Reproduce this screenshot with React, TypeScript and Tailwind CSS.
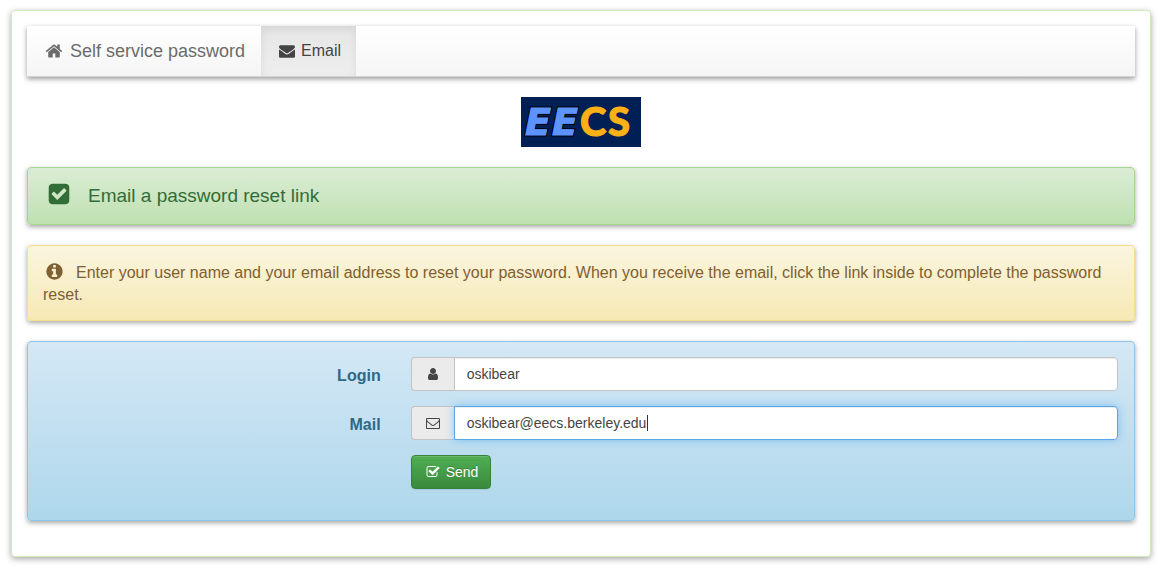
import { useEffect, useRef, useState } from 'react';
import type { ReactNode } from 'react';

const ICONS = {
  home: 'M1472 992v480q0 26-19 45t-45 19h-384v-384h-256v384h-384q-26 0-45-19t-19-45v-480q0-1 .5-3t.5-3l575-474 575 474q1 2 1 6zm223-69l-62 74q-8 9-21 11h-3q-13 0-21-7l-692-577-692 577q-12 8-24 7-13-2-21-11l-62-74q-8-10-7-23.5t11-21.5l719-599q32-26 76-26t76 26l244 204v-195q0-14 9-23t23-9h192q14 0 23 9t9 23v408l219 182q10 8 11 21.5t-7 23.5z',
  envelope:
    'M1792 710v794q0 66-47 113t-113 47h-1472q-66 0-113-47t-47-113v-794q44 49 101 87 362 246 497 345 57 42 92.5 65.5t94.5 48 110 24.5h2q51 0 110-24.5t94.5-48 92.5-65.5q170-123 498-345 57-39 100-87zm0-294q0 79-49 151t-122 123q-376 261-468 325-10 7-42.5 30.5t-54 38-52 32.5-57.5 27-50 9h-2q-23 0-50-9t-57.5-27-52-32.5-54-38-42.5-30.5q-91-64-262-182.5t-205-142.5q-62-42-117-115.5t-55-136.5q0-78 41.5-130t118.5-52h1472q65 0 112.5 47t47.5 113z',
  checkSquare:
    'M813 1299l614-614q19-19 19-45t-19-45l-102-102q-19-19-45-19t-45 19l-467 467-211-211q-19-19-45-19t-45 19l-102 102q-19 19-19 45t19 45l358 358q19 19 45 19t45-19zm851-883v960q0 119-84.5 203.5t-203.5 84.5h-960q-119 0-203.5-84.5t-84.5-203.5v-960q0-119 84.5-203.5t203.5-84.5h960q119 0 203.5 84.5t84.5 203.5z',
  infoCircle:
    'M1152 1376v-160q0-14-9-23t-23-9h-96v-512q0-14-9-23t-23-9h-320q-14 0-23 9t-9 23v160q0 14 9 23t23 9h96v320h-96q-14 0-23 9t-9 23v160q0 14 9 23t23 9h448q14 0 23-9t9-23zm-128-896v-160q0-14-9-23t-23-9h-192q-14 0-23 9t-9 23v160q0 14 9 23t23 9h192q14 0 23-9t9-23zm640 416q0 209-103 385.5t-279.5 279.5-385.5 103-385.5-103-279.5-279.5-103-385.5 103-385.5 279.5-279.5 385.5-103 385.5 103 279.5 279.5 103 385.5z',
  user: 'M1536 1399q0 109-62.5 187t-150.5 78h-854q-88 0-150.5-78t-62.5-187q0-85 8.5-160.5t31.5-152 58.5-131 94-89 134.5-34.5q131 128 313 128t313-128q76 0 134.5 34.5t94 89 58.5 131 31.5 152 8.5 160.5zm-256-887q0 159-112.5 271.5t-271.5 112.5-271.5-112.5-112.5-271.5 112.5-271.5 271.5-112.5 271.5 112.5 112.5 271.5z',
  envelopeOpen:
    'M1664 1504v-768q-32 36-69 66-268 206-426 338-51 43-83 67t-86.5 48.5-102.5 24.5h-2q-48 0-102.5-24.5t-86.5-48.5-83-67q-158-132-426-338-37-30-69-66v768q0 13 9.5 22.5t22.5 9.5h1472q13 0 22.5-9.5t9.5-22.5zm0-1051v-24.5l-.5-13-3-12.5-5.5-9-9-7.5-14-2.5h-1472q-13 0-22.5 9.5t-9.5 22.5q0 168 147 284 193 152 401 317 6 5 35 29.5t46 37.5 44.5 31.5 50.5 27.5 43 9h2q20 0 43-9t50.5-27.5 44.5-31.5 46-37.5 35-29.5q208-165 401-317 54-43 100.5-115.5t46.5-131.5zm128-37v1088q0 66-47 113t-113 47h-1472q-66 0-113-47t-47-113v-1088q0-66 47-113t113-47h1472q66 0 113 47t47 113z',
  checkSquareOpen:
    'M1472 930v318q0 119-84.5 203.5t-203.5 84.5h-832q-119 0-203.5-84.5t-84.5-203.5v-832q0-119 84.5-203.5t203.5-84.5h832q63 0 117 25 15 7 18 23 3 17-9 29l-49 49q-10 10-23 10-3 0-9-2-23-6-45-6h-832q-66 0-113 47t-47 113v832q0 66 47 113t113 47h832q66 0 113-47t47-113v-254q0-13 9-22l64-64q10-10 23-10 6 0 12 3 20 8 20 29zm231-489l-814 814q-24 24-57 24t-57-24l-430-430q-24-24-24-57t24-57l110-110q24-24 57-24t57 24l263 263 647-647q24-24 57-24t57 24l110 110q24 24 24 57t-24 57z',
};

function Icon({ name, className }: { name: keyof typeof ICONS; className: string }) {
  return (
    <svg viewBox="0 0 1792 1792" fill="currentColor" aria-hidden="true" className={className}>
      <path d={ICONS[name]} />
    </svg>
  );
}

function Logo() {
  return (
    <svg viewBox="0 0 120 50" role="img" aria-label="EECS" className="mx-auto mb-5 block h-[50px] w-[120px]">
      <rect width="120" height="50" fill="#001f54" />
      <g
        fontFamily="'DejaVu Sans', sans-serif"
        fontSize="38"
        fontWeight="700"
        fontStyle="italic"
        fill="#5c93ff"
        stroke="#000"
        strokeWidth="3"
        paintOrder="stroke"
      >
        <text x="4" y="38">E</text>
        <text x="31" y="38">E</text>
      </g>
      {/* Thin outline in the fill colour makes the letters heavier */}
      <g
        fontFamily="'DejaVu Sans', sans-serif"
        fontSize="38"
        fontWeight="700"
        fontStyle="italic"
        fill="#5c93ff"
        stroke="#5c93ff"
        strokeWidth="1"
      >
        <text x="4" y="38">E</text>
        <text x="31" y="38">E</text>
      </g>
      <g
        fontFamily="Lato, sans-serif"
        fontSize="40"
        fontWeight="900"
        fill="#fbb116"
        stroke="#fbb116"
        strokeWidth="1"
      >
        <text x="59" y="39">C</text>
        <text x="87" y="39">S</text>
      </g>
    </svg>
  );
}

interface FieldProps {
  id: string;
  label: string;
  icon: keyof typeof ICONS;
  type?: string;
  value: string;
  onChange: (value: string) => void;
  focused?: boolean;
}

function Field({ id, label, icon, type = 'text', value, onChange, focused }: FieldProps) {
  const ref = useRef<HTMLInputElement>(null);
  const [caret, setCaret] = useState(false);

  // Put the caret after the last character
  useEffect(() => {
    if (!focused || !ref.current) return;
    ref.current.focus();
    ref.current.setSelectionRange(value.length, value.length);
    setCaret(true);
  }, []);

  return (
    <div className="mb-[15px] flex">
      <label htmlFor={id} className="w-1/3 px-4 pt-2 text-right text-base leading-[22px] font-bold text-[#2d6987]">
        {label}
      </label>
      <div className="flex flex-1 pr-4 pl-[14px]">
        <span className="flex w-[43px] items-center justify-center rounded-l border border-r-0 border-[#c3c3c3] bg-[#ebebeb] text-[#444]">
          <Icon name={icon} className="size-[14px]" />
        </span>
        <div className="relative flex min-w-0 flex-1">
          <input
            ref={ref}
            id={id}
            type={type}
            value={value}
            onChange={(e) => {
              setCaret(false);
              onChange(e.target.value);
            }}
            onBlur={() => setCaret(false)}
            className="h-[34px] min-w-0 flex-1 rounded-r border border-[#c3c3c3] bg-white px-3 text-sm text-[#444] shadow-[inset_0_1px_1px_rgba(0,0,0,0.075)] outline-none focus:border-[#5aa5ea] focus:shadow-[inset_0_1px_1px_rgba(0,0,0,0.075),0_0_8px_rgba(82,168,236,0.6)]"
          />
          {caret && <span className="absolute top-[9px] left-[193px] h-4 w-px bg-[#333]" />}
        </div>
      </div>
    </div>
  );
}

function Panel({ className, children }: { className: string; children: ReactNode }) {
  return (
    <div className={`mb-5 rounded border bg-linear-to-b px-[15px] shadow-[0_2px_5px_rgba(0,0,0,0.35)] ${className}`}>
      {children}
    </div>
  );
}

export default function App() {
  const [login, setLogin] = useState('oskibear');
  const [mail, setMail] = useState('oskibear@eecs.berkeley.edu');

  return (
    <div className="bg-white py-[10px] pr-[10px] pl-[11px] font-['Liberation_Sans',Arial,sans-serif] text-base leading-[22px]">
      <main className="rounded border border-[#d0e9be] bg-white p-[15px] shadow-[0_2px_6px_rgba(0,0,0,0.35)]">
        <nav className="mb-5 flex h-[51px] border-b border-[#d4d4d4] bg-linear-to-b from-white to-[#f5f5f5] shadow-[0_2px_5px_rgba(0,0,0,0.4)]">
          <a href="#" className="flex items-center gap-[5px] pr-4 pl-[15px] text-lg text-[#6b6b6b]">
            <span className="flex w-[23px] justify-center">
              <Icon name="home" className="size-[18px]" />
            </span>
            Self service password
          </a>
          <a
            href="#email"
            aria-current="page"
            className="flex items-center gap-1 bg-linear-to-b from-[#e6e6e6] to-[#eeeeee] px-[15px] text-[#444] shadow-[inset_0_3px_9px_rgba(0,0,0,0.075)]"
          >
            <span className="flex w-[21px] justify-center">
              <Icon name="envelope" className="size-4" />
            </span>
            Email
          </a>
        </nav>

        <Logo />

        <Panel className="flex items-center gap-[14px] border-[#a5d690] from-[#dbedd5] to-[#bfe0b0] py-[14px] text-[19px] text-[#326d38]">
          <span className="flex w-[31px] justify-center pb-1">
            <Icon name="checkSquare" className="size-[24px]" />
          </span>
          <h1 className="leading-[26px]">Email a password reset link</h1>
        </Panel>

        <Panel className="border-[#f5df8b] from-[#fbf5df] to-[#f6e9b4] pt-4 pb-[14px] text-[#7f6032]">
          <p>
            <Icon name="infoCircle" className="mr-3 ml-[2px] inline-block size-[19px] align-[-3px]" />
            Enter your user name and your email address to reset your password. When you receive the email, click the
            link inside to complete the password reset.
          </p>
        </Panel>

        <form
          onSubmit={(e) => e.preventDefault()}
          className="mb-5 rounded border border-[#8fc6e8] bg-linear-to-b from-[#d4e8f5] to-[#aed7ec] py-[15px] shadow-[0_2px_5px_rgba(0,0,0,0.35)]"
        >
          <Field id="login" label="Login" icon="user" value={login} onChange={setLogin} />
          <Field id="mail" label="Mail" icon="envelopeOpen" value={mail} onChange={setMail} focused />
          <div className="mb-4 ml-[33.333%] pr-4 pl-[14px]">
            <button
              type="submit"
              className="flex h-[34px] items-center gap-1 rounded border border-[#37823a] bg-linear-to-b from-[#50ae54] to-[#3a8a3c] px-3 text-sm text-white shadow-[inset_0_1px_0_rgba(255,255,255,0.15),0_1px_1px_rgba(0,0,0,0.075)] text-shadow-[0_-1px_0_rgba(0,0,0,0.2)]"
            >
              <span className="flex w-[18px] justify-center">
                <Icon name="checkSquareOpen" className="size-[14px]" />
              </span>
              Send
            </button>
          </div>
        </form>
      </main>
    </div>
  );
}
